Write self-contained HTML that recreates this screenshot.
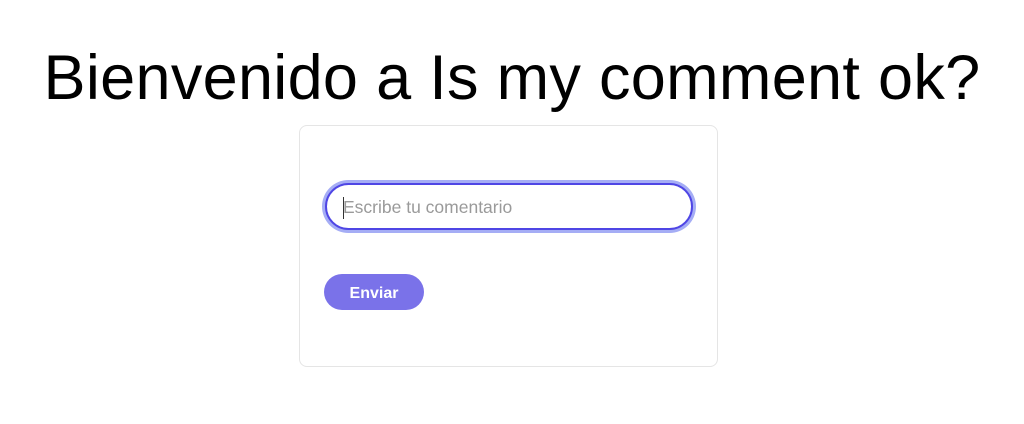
<!DOCTYPE html>
<html><head><style>
body{margin:0;background:#fff;font-family:"Liberation Sans",sans-serif;width:1024px;height:424px;overflow:hidden;position:relative}
h1{position:absolute;top:38px;left:0;width:1024px;margin:0;text-align:center;font-weight:400;font-size:63px;line-height:80px;color:#000;letter-spacing:0.3px}
.card{position:absolute;left:299px;top:125px;width:419px;height:242px;border:1px solid #e5e5e5;border-radius:8px;box-sizing:border-box}
.inp{position:absolute;left:322px;top:180px;width:374px;height:53px;border-radius:27px;background:#a5adf5;box-sizing:border-box;padding:3px}
.inp div{width:100%;height:100%;border:2px solid #4f46e5;border-radius:24px;background:#fff;box-sizing:border-box;font-size:17.5px;color:#9a9a9a;line-height:45px;padding-left:16px;position:relative}
.inp div:before{content:"";position:absolute;left:16px;top:12px;width:1px;height:22px;background:#333}
.btn{position:absolute;left:324px;top:274px;width:100px;height:36px;border-radius:18px;background:#7a72e9;color:#fff;font-weight:700;font-size:16px;line-height:40px;text-align:center}
</style></head><body>
<h1>Bienvenido a Is my comment ok?</h1>
<div class="card"></div>
<div class="inp"><div>Escribe tu comentario</div></div>
<div class="btn">Enviar</div>
</body></html>
